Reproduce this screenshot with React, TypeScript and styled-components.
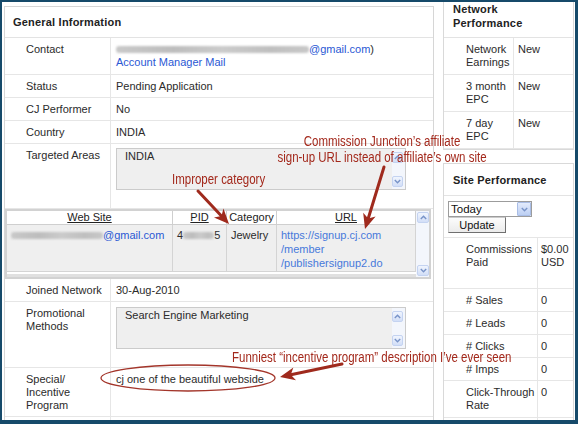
import React from "react";
import styled, { createGlobalStyle } from "styled-components";

const Global = createGlobalStyle`
  html, body { margin: 0; padding: 0; background: #fff; }
  body {
    font-family: "Liberation Sans", Arial, sans-serif;
    font-size: 11px;
    color: #2b2b2b;
  }
  * { box-sizing: border-box; }
`;

const Frame = styled.div`
  position: relative;
  width: 578px;
  height: 424px;
  border: 2px solid #164a6a;
  border-right-width: 3px;
  border-bottom-width: 4px;
  overflow: hidden;
  background: #fff;
`;

const Layout = styled.div`
  display: flex;
  align-items: flex-start;
  gap: 9px;
  padding-left: 2px;
`;

/* ---------- main panel ---------- */

const MainPanel = styled.section`
  width: 430px;
  margin-top: 4px;
  border: 1px solid #d6d6d6;
`;

const PanelTitle = styled.div`
  height: 31px;
  line-height: 30px;
  padding-left: 8px;
  font-weight: bold;
  letter-spacing: 0.2px;
  color: #222;
  border-bottom: 1px solid #e3e3e3;
`;

const InfoRow = styled.div<{ $minH?: number }>`
  display: grid;
  grid-template-columns: 106px 1fr;
  border-bottom: 1px solid #e6e6e6;
  min-height: ${(p) => p.$minH ?? 0}px;
`;

const InfoLabel = styled.div`
  padding: 5px 4px 4px 21px;
  border-right: 1px solid #e6e6e6;
  line-height: 13px;
  white-space: nowrap;
`;

const InfoValue = styled.div<{ $pt?: number; $pb?: number }>`
  padding: ${(p) => p.$pt ?? 5}px 5px ${(p) => p.$pb ?? 4}px;
  line-height: 13px;
  white-space: nowrap;
`;

const WideRow = styled.div`
  padding: 0;
`;

const Link = styled.span<{ $light?: boolean }>`
  color: ${(p) => (p.$light ? "#4779db" : "#2a58d4")};
`;

const Smudge = styled.span<{ $w: number }>`
  display: inline-block;
  width: ${(p) => p.$w}px;
  height: 7px;
  border-radius: 3px;
  background: linear-gradient(90deg, #c9c9c9, #bdbdbd 30%, #cbcbcb 55%, #bfbfbf 80%, #c8c8c8);
  filter: blur(1.2px);
  vertical-align: 0px;
`;

const ListBox = styled.div`
  display: flex;
  width: 290px;
  height: 42px;
  border: 1px solid #cbcbcb;
  background: #efefef;
`;

const ListText = styled.div`
  flex: 1;
  padding: 1px 8px;
  line-height: 13px;
`;

const ScrollBar = styled.div<{ $pad: string }>`
  display: flex;
  flex-direction: column;
  justify-content: space-between;
  width: 13px;
  padding: ${(p) => p.$pad};
  background: #f3f6fc;
`;

const ScrollBtn = styled.div`
  height: 11px;
  border: 1px solid #c4d3f1;
  border-radius: 2px;
  background: linear-gradient(#f0f5fe, #d2def7);
  display: flex;
  align-items: center;
  justify-content: center;
`;

const Chevron = ({ up }: { up?: boolean }) => (
  <svg width="7" height="5" viewBox="0 0 7 5">
    <polyline
      points={up ? "0.8,4 3.5,1.2 6.2,4" : "0.8,1 3.5,3.8 6.2,1"}
      fill="none"
      stroke="#7893c8"
      strokeWidth="1.4"
    />
  </svg>
);

const Scroller = ({ pad }: { pad: string }) => (
  <ScrollBar $pad={pad}>
    <ScrollBtn>
      <Chevron up />
    </ScrollBtn>
    <ScrollBtn>
      <Chevron />
    </ScrollBtn>
  </ScrollBar>
);

/* ---------- website table ---------- */

const SiteBox = styled.div`
  display: flex;
  width: 426px;
  height: 70px;
  border: 2px solid #d2d2d2;
  background: #fff;
`;

const SiteArea = styled.div`
  flex: 1;
  display: flex;
  flex-direction: column;
`;

const SiteGrid = styled.div`
  display: grid;
  grid-template-columns: 166px 54px 50px 1fr;
  grid-template-rows: 14px 47px;
`;

const HeadCell = styled.div<{ $sort?: boolean }>`
  text-align: center;
  line-height: 13px;
  color: #222;
  background: #fff;
  border-right: 1px solid #cfcfcf;
  border-bottom: 1px solid #cfcfcf;
  text-decoration: ${(p) => (p.$sort ? "underline" : "none")};
`;

const DataCell = styled.div`
  background: #efefef;
  border-right: 1px solid #d4d4d4;
  border-bottom: 1px solid #d4d4d4;
  padding: 3px 4px 0;
  line-height: 14px;
  white-space: nowrap;
`;

const SiteRule = styled.div`
  height: 3px;
  margin-top: 2px;
  background: #e0e0e0;
`;

/* ---------- side panels ---------- */

const SideColumn = styled.aside`
  width: 131px;
  display: flex;
  flex-direction: column;
  gap: 13px;
`;

const SidePanel = styled.section<{ $open?: boolean }>`
  border: 1px solid #d9d9d9;
  ${(p) => (p.$open ? "border-top: none;" : "")}
`;

const SideTitle = styled.div<{ $pt: number; $pb: number }>`
  padding: ${(p) => p.$pt}px 4px ${(p) => p.$pb}px 9px;
  font-weight: bold;
  letter-spacing: 0.2px;
  line-height: 14px;
  color: #222;
  border-bottom: 1px solid #e3e3e3;
`;

const StatRow = styled.div<{ $lw: number; $minH?: number }>`
  display: grid;
  grid-template-columns: ${(p) => p.$lw}px 1fr;
  border-bottom: 1px solid #e6e6e6;
  min-height: ${(p) => p.$minH ?? 0}px;
`;

const StatLabel = styled.div<{ $pb?: number }>`
  padding: 5px 2px ${(p) => p.$pb ?? 4}px 22px;
  border-right: 1px solid #e6e6e6;
  line-height: 13px;
  white-space: nowrap;
`;

const StatValue = styled.div<{ $pl: number }>`
  padding: 5px 2px 4px ${(p) => p.$pl}px;
  line-height: 13px;
  white-space: nowrap;
`;

const Controls = styled.div`
  padding: 5px 4px 4px;
  border-bottom: 1px solid #e6e6e6;
`;

const SelectBox = styled.div`
  display: flex;
  width: 84px;
  height: 16px;
  border: 1px solid #9c9c9c;
  background: #fff;
`;

const SelectText = styled.div`
  flex: 1;
  padding-left: 2px;
  line-height: 14px;
  font-size: 11.5px;
  color: #111;
`;

const SelectArrow = styled.div`
  width: 14px;
  border: 1px solid #a9bde6;
  border-radius: 1px;
  background: linear-gradient(#e3ebfc, #bccff3);
  display: flex;
  align-items: center;
  justify-content: center;
`;

const UpdateButton = styled.button`
  display: block;
  width: 58px;
  height: 16px;
  padding: 0;
  margin: 0;
  border: 1px solid;
  border-color: #cacaca #6f6f6f #6f6f6f #cacaca;
  background: linear-gradient(#fcfcfc, #ebebeb);
  font-family: "Liberation Sans", Arial, sans-serif;
  font-size: 11px;
  line-height: 13px;
  color: #111;
`;

/* ---------- annotations ---------- */

const Note = styled.div<{ $left: number; $top: number; $width?: number }>`
  position: absolute;
  left: ${(p) => p.$left}px;
  top: ${(p) => p.$top}px;
  ${(p) =>
    p.$width
      ? `width: ${p.$width}px; text-align: center; transform-origin: 50% 0;`
      : "transform-origin: 0 0;"}
  transform: scaleX(0.82);
  font-family: "Liberation Sans", Arial, sans-serif;
  font-size: 14px;
  line-height: 16px;
  color: #a3281b;
  white-space: nowrap;
  pointer-events: none;
`;

const Overlay = styled.svg`
  position: absolute;
  left: -2px;
  top: -2px;
  width: 578px;
  height: 424px;
  pointer-events: none;
`;

const RED = "#9f2a1d";

function Arrow({ x1, y1, x2, y2 }: { x1: number; y1: number; x2: number; y2: number }) {
  const dx = x2 - x1;
  const dy = y2 - y1;
  const L = Math.hypot(dx, dy);
  const ux = dx / L;
  const uy = dy / L;
  const px = -uy;
  const py = ux;
  const len = 15;
  const half = 6.5;
  const notch = 4;
  const bx = x2 - ux * len;
  const by = y2 - uy * len;
  const nx = x2 - ux * (len - notch);
  const ny = y2 - uy * (len - notch);
  const pts = `${x2},${y2} ${bx + px * half},${by + py * half} ${nx},${ny} ${bx - px * half},${by - py * half}`;
  return (
    <g>
      <line x1={x1} y1={y1} x2={nx} y2={ny} stroke={RED} strokeWidth={3} strokeLinecap="round" />
      <polygon points={pts} fill={RED} />
    </g>
  );
}

export default function App() {
  return (
    <>
      <Global />
      <Frame>
        <Layout>
          <MainPanel>
            <PanelTitle>General Information</PanelTitle>
            <InfoRow>
              <InfoLabel>Contact</InfoLabel>
              <InfoValue $pb={5}>
                <Smudge $w={193} />
                <Link>@gmail.com</Link>)
                <br />
                <Link>Account Manager Mail</Link>
              </InfoValue>
            </InfoRow>
            <InfoRow>
              <InfoLabel>Status</InfoLabel>
              <InfoValue>Pending Application</InfoValue>
            </InfoRow>
            <InfoRow>
              <InfoLabel>CJ Performer</InfoLabel>
              <InfoValue>No</InfoValue>
            </InfoRow>
            <InfoRow>
              <InfoLabel>Country</InfoLabel>
              <InfoValue>INDIA</InfoValue>
            </InfoRow>
            <InfoRow>
              <InfoLabel>Targeted Areas</InfoLabel>
              <InfoValue $pt={4} $pb={18}>
                <ListBox>
                  <ListText>INDIA</ListText>
                  <Scroller pad="3px 2px 2px 0" />
                </ListBox>
              </InfoValue>
            </InfoRow>
            <WideRow>
              <SiteBox>
                <SiteArea>
                  <SiteGrid>
                    <HeadCell $sort>Web Site</HeadCell>
                    <HeadCell $sort>PID</HeadCell>
                    <HeadCell>Category</HeadCell>
                    <HeadCell $sort>URL</HeadCell>
                    <DataCell>
                      <Smudge $w={92} />
                      <Link>@gmail.com</Link>
                    </DataCell>
                    <DataCell>
                      4<Smudge $w={31} />5
                    </DataCell>
                    <DataCell>Jewelry</DataCell>
                    <DataCell>
                      <Link $light>
                        https://signup.cj.com
                        <br />
                        /member
                        <br />
                        /publishersignup2.do
                      </Link>
                    </DataCell>
                  </SiteGrid>
                  <SiteRule />
                </SiteArea>
                <Scroller pad="1px 0 1px 1px" />
              </SiteBox>
            </WideRow>
            <InfoRow>
              <InfoLabel>Joined Network</InfoLabel>
              <InfoValue>30-Aug-2010</InfoValue>
            </InfoRow>
            <InfoRow>
              <InfoLabel>
                Promotional
                <br />
                Methods
              </InfoLabel>
              <InfoValue $pt={5} $pb={18}>
                <ListBox>
                  <ListText>Search Engine Marketing</ListText>
                  <Scroller pad="3px 2px 2px 0" />
                </ListBox>
              </InfoValue>
            </InfoRow>
            <InfoRow>
              <InfoLabel>
                Special/
                <br />
                Incentive
                <br />
                Program
              </InfoLabel>
              <InfoValue>cj one of the beautiful webside</InfoValue>
            </InfoRow>
            <InfoRow $minH={20}>
              <InfoLabel />
              <InfoValue />
            </InfoRow>
          </MainPanel>

          <SideColumn>
            <SidePanel $open>
              <SideTitle $pt={0} $pb={7}>
                Network
                <br />
                Performance
              </SideTitle>
              <StatRow $lw={70}>
                <StatLabel $pb={5}>
                  Network
                  <br />
                  Earnings
                </StatLabel>
                <StatValue $pl={4}>New</StatValue>
              </StatRow>
              <StatRow $lw={70}>
                <StatLabel $pb={5}>
                  3 month
                  <br />
                  EPC
                </StatLabel>
                <StatValue $pl={4}>New</StatValue>
              </StatRow>
              <StatRow $lw={70}>
                <StatLabel $pb={5}>
                  7 day
                  <br />
                  EPC
                </StatLabel>
                <StatValue $pl={4}>New</StatValue>
              </StatRow>
            </SidePanel>

            <SidePanel>
              <SideTitle $pt={9} $pb={8}>
                Site Performance
              </SideTitle>
              <Controls>
                <SelectBox>
                  <SelectText>Today</SelectText>
                  <SelectArrow>
                    <Chevron />
                  </SelectArrow>
                </SelectBox>
                <UpdateButton type="button">Update</UpdateButton>
              </Controls>
              <StatRow $lw={94}>
                <StatLabel $pb={19}>
                  Commissions
                  <br />
                  Paid
                </StatLabel>
                <StatValue $pl={3}>
                  $0.00
                  <br />
                  USD
                </StatValue>
              </StatRow>
              <StatRow $lw={94}>
                <StatLabel># Sales</StatLabel>
                <StatValue $pl={3}>0</StatValue>
              </StatRow>
              <StatRow $lw={94}>
                <StatLabel># Leads</StatLabel>
                <StatValue $pl={3}>0</StatValue>
              </StatRow>
              <StatRow $lw={94}>
                <StatLabel># Clicks</StatLabel>
                <StatValue $pl={3}>0</StatValue>
              </StatRow>
              <StatRow $lw={94}>
                <StatLabel># Imps</StatLabel>
                <StatValue $pl={3}>0</StatValue>
              </StatRow>
              <StatRow $lw={94}>
                <StatLabel $pb={5}>
                  Click-Through
                  <br />
                  Rate
                </StatLabel>
                <StatValue $pl={3}>0</StatValue>
              </StatRow>
              <StatRow $lw={94} $minH={20}>
                <StatLabel />
                <StatValue $pl={3} />
              </StatRow>
            </SidePanel>
          </SideColumn>
        </Layout>

        <Overlay viewBox="0 0 578 424">
          <Arrow x1={198} y1={191} x2={229} y2={224} />
          <Arrow x1={384} y1={167} x2={365} y2={229} />
          <Arrow x1={342} y1={364} x2={280} y2={377} />
          <ellipse cx={188} cy={378} rx={87} ry={13} fill="none" stroke="#a3352a" strokeWidth={1.3} />
        </Overlay>

        <Note $left={230} $top={131} $width={300}>
          Commission Junction’s affiliate
          <br />
          sign-up URL instead of affiliate’s own site
        </Note>
        <Note $left={170} $top={169}>
          Improper category
        </Note>
        <Note $left={230} $top={347}>
          Funniest “incentive program” description I’ve ever seen
        </Note>
      </Frame>
    </>
  );
}
